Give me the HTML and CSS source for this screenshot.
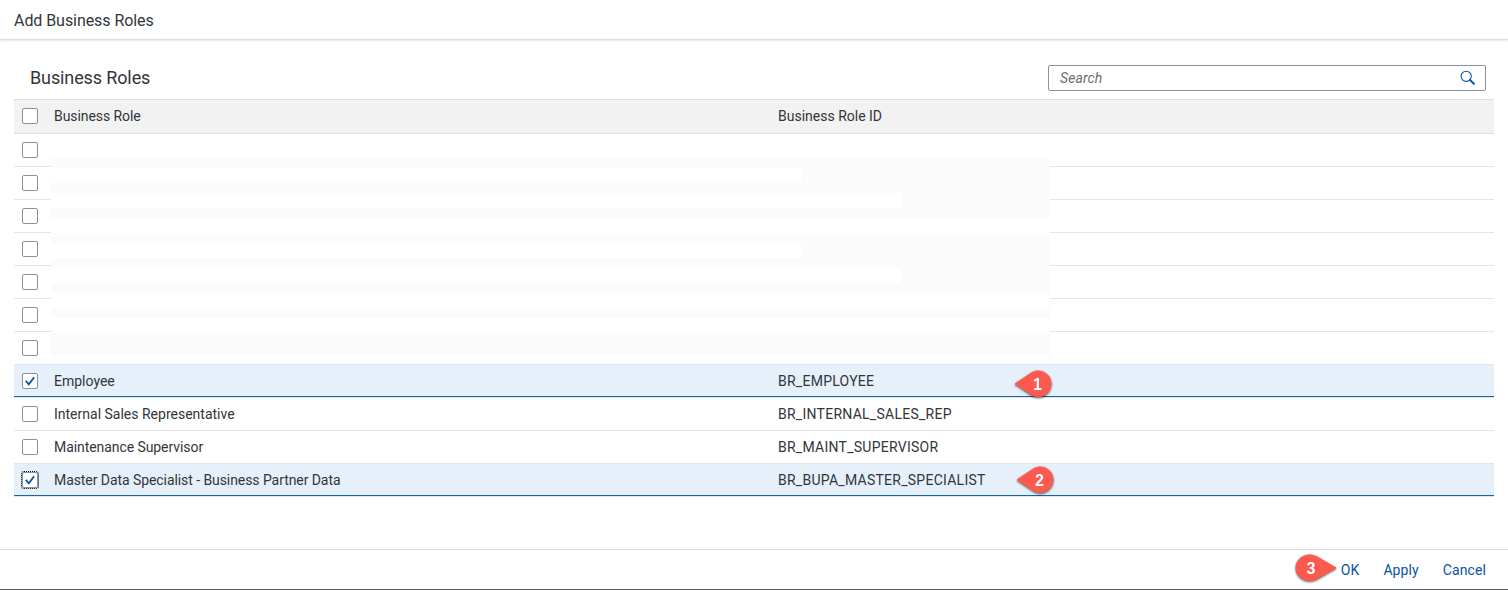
FILE: index.html
```html
<!DOCTYPE html>
<html lang="en">
<head>
<meta charset="utf-8">
<title>Add Business Roles</title>
<link rel="stylesheet" href="styles.css">
</head>
<body>
<div class="dialog">
  <header class="dialog-header"><h1 class="dialog-title">Add Business Roles</h1></header>
  <main class="content">
    <div class="toolbar">
      <h2 class="table-title">Business Roles</h2>
      <div class="search">
        <span class="placeholder">Search</span>
        <svg class="search-icon" width="16" height="16" viewBox="0 0 16 16" fill="none" stroke="#0854a0"><circle cx="6.2" cy="6.3" r="5.1" stroke-width="1.1"/><path d="M10 10L14 13.9" stroke-width="2" stroke-linecap="round"/></svg>
      </div>
    </div>
    <div class="table">
      <div class="row head"><span class="check"></span><span class="name tight">Business Role</span><span class="id-head">Business Role ID</span></div>
      <div class="row"><span class="check"></span></div>
      <div class="row"><span class="check"></span></div>
      <div class="row"><span class="check"></span></div>
      <div class="row"><span class="check"></span></div>
      <div class="row"><span class="check"></span></div>
      <div class="row"><span class="check"></span></div>
      <div class="row"><span class="check"></span></div>
      <div class="row selected"><span class="check"><svg class="tick" viewBox="0 0 14 14"><path d="M2.8 6.8L5.8 10.4L11.2 3.2"/></svg></span><span class="name">Employee</span><span class="id">BR_EMPLOYEE</span></div>
      <div class="row"><span class="check"></span><span class="name">Internal Sales Representative</span><span class="id">BR_INTERNAL_SALES_REP</span></div>
      <div class="row"><span class="check"></span><span class="name tight">Maintenance Supervisor</span><span class="id">BR_MAINT_SUPERVISOR</span></div>
      <div class="row selected"><span class="check focused"><svg class="tick" viewBox="0 0 14 14"><path d="M2.8 6.8L5.8 10.4L11.2 3.2"/></svg></span><span class="name tight">Master Data Specialist - Business Partner Data</span><span class="id">BR_BUPA_MASTER_SPECIALIST</span></div>
      <div class="mask">
        <i class="band short"></i><i class="band medium"></i><i class="band"></i><i class="band short"></i><i class="band medium"></i><i class="band"></i><i class="band"></i>
      </div>
    </div>
  </main>
  <footer class="footer"><span class="action">OK</span><span class="action">Apply</span><span class="action">Cancel</span></footer>
  <svg class="callout callout-1" width="44" height="34" viewBox="0 0 44 34"><path d="M3 17L19.5 5.2C27.5 -.2 39 5.5 39 17S27.5 34.2 19.5 28.8Z" transform="translate(0 1) scale(1 .93)"/><text x="25.5" y="22.5">1</text></svg>
  <svg class="callout callout-2" width="44" height="34" viewBox="0 0 44 34"><path d="M3 17L19.5 5.2C27.5 -.2 39 5.5 39 17S27.5 34.2 19.5 28.8Z" transform="translate(0 1) scale(1 .93)"/><text x="25.5" y="22.5">2</text></svg>
  <svg class="callout callout-3" width="46" height="34" viewBox="0 0 46 34"><path d="M43 17L24 5.2C15 -.2 3 5.5 3 17S15 34.2 24 28.8Z" transform="translate(0 1) scale(1 .93)"/><text x="18" y="22.5">3</text></svg>
</div>
</body>
</html>
```
FILE: styles.css
```css
* { box-sizing: border-box; }
body { margin: 0; font-family: Roboto, "Liberation Sans", sans-serif; font-size: 14px; color: #32363a; background: #fff; }
.dialog { position: relative; display: flex; flex-direction: column; width: 1508px; height: 590px; background: #fff; border-bottom: 1px solid #626567; overflow: hidden; }
.dialog-header { display: flex; align-items: center; height: 40px; padding: 2px 0 0 14px; border-bottom: 1px solid #dcdcdc; box-shadow: 0 1px 2px rgba(0,0,0,.1); }
.dialog-title { margin: 0; font-size: 16px; font-weight: 400; letter-spacing: -.06px; }
.content { flex: 1; padding: 25px 14px 0; }
.toolbar { display: flex; justify-content: space-between; height: 34px; padding: 0 8px 0 16px; }
.table-title { margin: 0; font-size: 18px; line-height: 26px; font-weight: 400; letter-spacing: -.12px; }
.search { display: flex; align-items: center; justify-content: space-between; width: 438px; height: 26px; padding: 0 9px 1px 11px; border: 1px solid #89919a; border-radius: 2px; }
.placeholder { font-style: italic; color: #6a6d70; letter-spacing: .1px; }
.table { position: relative; border-top: 1px solid #dedede; }
.row { display: grid; grid-template-columns: 32px 724px 1fr; align-items: center; height: 33px; padding-left: 8px; border-bottom: 1px solid #e5e5e5; white-space: nowrap; }
.head { height: 34px; padding-bottom: 1px; background: #f2f2f2; border-bottom-color: #dedede; }
.selected { background: #e5f0fa; box-shadow: inset 0 -1px #1763a8; }
.tight { letter-spacing: -.07px; }
.id { letter-spacing: .26px; }
.check { display: flex; align-items: center; justify-content: center; width: 16px; height: 16px; border: 1px solid #89919a; border-radius: 2px; background: #fff; }
.focused { outline: 1px dotted #000; }
.tick { flex: none; width: 14px; height: 14px; fill: none; stroke: #0854a0; stroke-width: 1.8; }
.mask { position: absolute; left: 37px; top: 58px; width: 999px; height: 198px; display: flex; flex-direction: column; gap: 10px; padding-top: 10px; background: #fbfbfb; }
.band { height: 15px; background: #fff; }
.short { width: 750px; }
.medium { width: 850px; }
.footer { display: flex; align-items: center; justify-content: flex-end; gap: 24px; height: 40px; padding-right: 22px; border-top: 1px solid #d9d9d9; color: #0854a0; }
.action { letter-spacing: .1px; }
.callout { position: absolute; filter: drop-shadow(0 1px 1px rgba(0,0,0,.6)); }
.callout path { fill: #fc5a4e; stroke: #fc5a4e; stroke-linejoin: round; }
.callout text { fill: #fff; font: bold 16px "Liberation Sans", Arial, sans-serif; text-anchor: middle; }
.callout-1 { left: 1012px; top: 367px; }
.callout-2 { left: 1014px; top: 463px; }
.callout-3 { left: 1293px; top: 551px; }
```
